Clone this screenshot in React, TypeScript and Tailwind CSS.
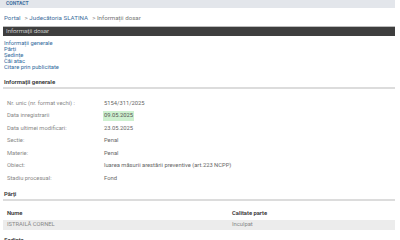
const links = ["Informații generale", "Părți", "Ședințe", "Căi atac", "Citare prin publicitate"];

const rows: [string, string][] = [
  ["Nr. unic (nr. format vechi) :", "5154/311/2025"],
  ["Data inregistrarii", "09.05.2025"],
  ["Data ultimei modificari:", "23.05.2025"],
  ["Sectie:", "Penal"],
  ["Materie:", "Penal"],
  ["Obiect:", "luarea măsurii arestării preventive (art.223 NCPP)"],
  ["Stadiu procesual:", "Fond"],
];

export default function App() {
  return (
    <div className="h-[240px] w-[400px] overflow-hidden bg-white font-['Roboto',sans-serif] text-[5.8px] text-[#666]">
      <div className="flex h-[8px] w-[395px] items-center bg-[#e3e6eb] px-[6px]">
        <span className="text-[5px] font-bold text-[#3f6f9f]">CONTACT</span>
      </div>

      <div className="mt-[7px] flex h-[6px] items-center gap-[4px] px-[4px] text-[6.2px] leading-[6px]">
        <span className="text-[#3d6e9c]">Portal</span>
        <span className="text-[#888]">&gt; <span className="text-[#3d6e9c]">Judecătoria SLATINA</span></span>
        <span className="text-[#888]">&gt; <span className="text-[#777]">Informații dosar</span></span>
      </div>

      <div className="ml-[3px] mt-[5px] flex h-[10px] w-[392px] items-center border-t border-[#bdbdbd] bg-[#3e3e3e] px-[3px]">
        <span className="text-[6.2px] font-light text-white">Informații dosar</span>
      </div>

      <div className="mt-[4px] flex flex-col px-[4px]">
        {links.map((l) => (
          <span key={l} className="h-[6px] leading-[6px] text-[#2f6a9c]">
            {l}
          </span>
        ))}
      </div>

      <div className="ml-[3px] mt-[9px] w-[392px] border-b-2 border-[#dcdcdc] px-[1px] pb-[2px]">
        <span className="block h-[6px] text-[6px] leading-[6px] font-semibold text-[#333]">Informații generale</span>
      </div>

      <div className="mt-[8px] flex flex-col">
        {rows.map(([k, v]) => (
          <div key={k} className="flex h-[12.5px] items-center">
            <span className="w-[104px] pl-[7px] text-[#888]">{k}</span>
            <span
              className={
                k === "Data inregistrarii"
                  ? "-ml-[1px] flex h-[10px] items-center bg-[#cdf0cf] px-[1px] text-[#555]"
                  : "text-[#666]"
              }
            >
              {v}
            </span>
          </div>
        ))}
      </div>

      <div className="ml-[3px] mt-[6px] w-[392px] border-b-2 border-[#dcdcdc] px-[1px] pb-[2px]">
        <span className="block h-[6px] leading-[6px] font-semibold text-[#333]">Părți</span>
      </div>

      <div className="ml-[3px] mt-[8px] w-[392px]">
        <div className="flex h-[10px] items-center font-semibold text-[#333]">
          <span className="w-[229px] pl-[4px]">Nume</span>
          <span>Calitate parte</span>
        </div>
        <div className="mt-[1px] flex h-[10px] items-center bg-[#ececec] text-[#888]">
          <span className="w-[229px] pl-[4px]">ISTRAILĂ CORNEL</span>
          <span>Inculpat</span>
        </div>
      </div>

      <div className="ml-[4px] mt-[7px] h-[6px] leading-[6px] font-semibold text-[#333]">Ședințe</div>
    </div>
  );
}
